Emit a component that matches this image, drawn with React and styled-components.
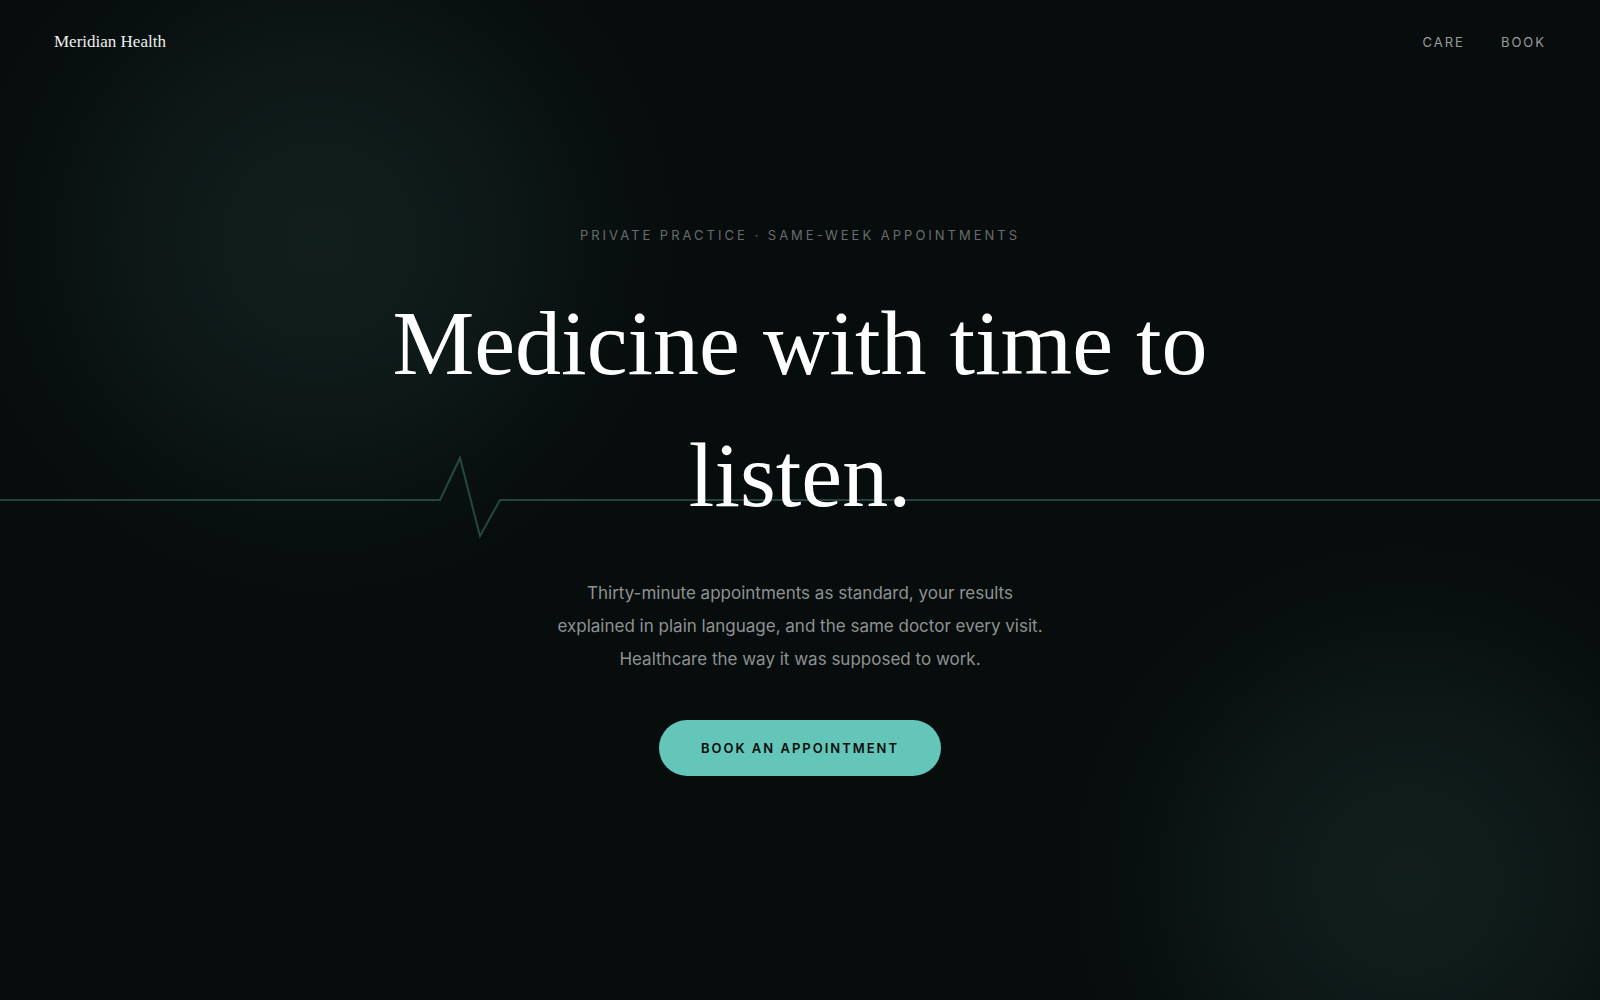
import React from "react";
import styled, { createGlobalStyle } from "styled-components";

const GlobalStyle = createGlobalStyle`
  *, *::before, *::after { box-sizing: border-box; }
  body {
    margin: 0;
    background: #070c0c;
    color: #ffffff;
    font-family: Inter, "Liberation Sans", sans-serif;
  }
`;

const Page = styled.div`
  position: relative;
  isolation: isolate;
  display: flex;
  flex-direction: column;
  min-height: 100vh;
  overflow: hidden;
  background:
    radial-gradient(circle 380px at 20% 24%, rgba(99, 199, 184, 0.095), rgba(99, 199, 184, 0.085) 25%, rgba(99, 199, 184, 0.058) 50%, rgba(99, 199, 184, 0.018) 75%, transparent),
    radial-gradient(circle 360px at 88% 88%, rgba(99, 199, 184, 0.095), rgba(99, 199, 184, 0.085) 25%, rgba(99, 199, 184, 0.058) 50%, rgba(99, 199, 184, 0.018) 75%, transparent),
    #070c0c;
`;

const Pulse = styled.svg`
  position: absolute;
  inset: 0;
  z-index: -1;
  width: 100%;
  height: 100%;
  fill: none;
  stroke: #63c7b8;
  stroke-width: 2;
  opacity: 0.3;
`;

const Header = styled.header`
  display: flex;
  align-items: center;
  justify-content: space-between;
  height: 84px;
  padding: 0 54px;
`;

const Brand = styled.a`
  color: #eef1f0;
  font: 17px/24px "Liberation Serif", serif;
  text-decoration: none;
`;

const Nav = styled.nav`
  display: flex;
  gap: 36px;
`;

const NavLink = styled.a`
  color: #9a9d9d;
  font-size: 13px;
  line-height: 20px;
  letter-spacing: 2px;
  text-decoration: none;
  text-transform: uppercase;
`;

const Hero = styled.main`
  flex: 1;
  display: flex;
  flex-direction: column;
  align-items: center;
  justify-content: center;
  padding: 0 24px 84px;
  text-align: center;
`;

const Eyebrow = styled.p`
  margin: 0 0 32px;
  color: #686c6c;
  font-size: 13px;
  line-height: 20px;
  letter-spacing: 3px;
  text-transform: uppercase;
`;

const Title = styled.h1`
  max-width: 900px;
  margin: 0 0 36px;
  font: 400 92px/132px "Liberation Serif", serif;
`;

const Lead = styled.p`
  max-width: 500px;
  margin: 0 0 44px;
  color: #8f9292;
  font-size: 17px;
  line-height: 33px;
`;

const BookButton = styled.button`
  padding: 18px 42px;
  border: 0;
  border-radius: 28px;
  background: #63c6b8;
  color: #060c0c;
  font: 600 13px/20px Inter, "Liberation Sans", sans-serif;
  letter-spacing: 2px;
  text-transform: uppercase;
  cursor: pointer;
`;

export default function App() {
  return (
    <>
      <GlobalStyle />
      <Page>
        <Pulse viewBox="0 0 1600 1000" preserveAspectRatio="none" aria-hidden="true">
          <path d="M0 500H440L460 458L480 536L500 500H1600" />
        </Pulse>
        <Header>
          <Brand href="#home">Meridian Health</Brand>
          <Nav aria-label="Main">
            <NavLink href="#care">Care</NavLink>
            <NavLink href="#book">Book</NavLink>
          </Nav>
        </Header>
        <Hero>
          <Eyebrow>Private practice · Same-week appointments</Eyebrow>
          <Title>Medicine with time to listen.</Title>
          <Lead>
            Thirty-minute appointments as standard, your results explained in
            plain language, and the same doctor every visit. Healthcare the way
            it was supposed to work.
          </Lead>
          <BookButton type="button">Book an appointment</BookButton>
        </Hero>
      </Page>
    </>
  );
}
